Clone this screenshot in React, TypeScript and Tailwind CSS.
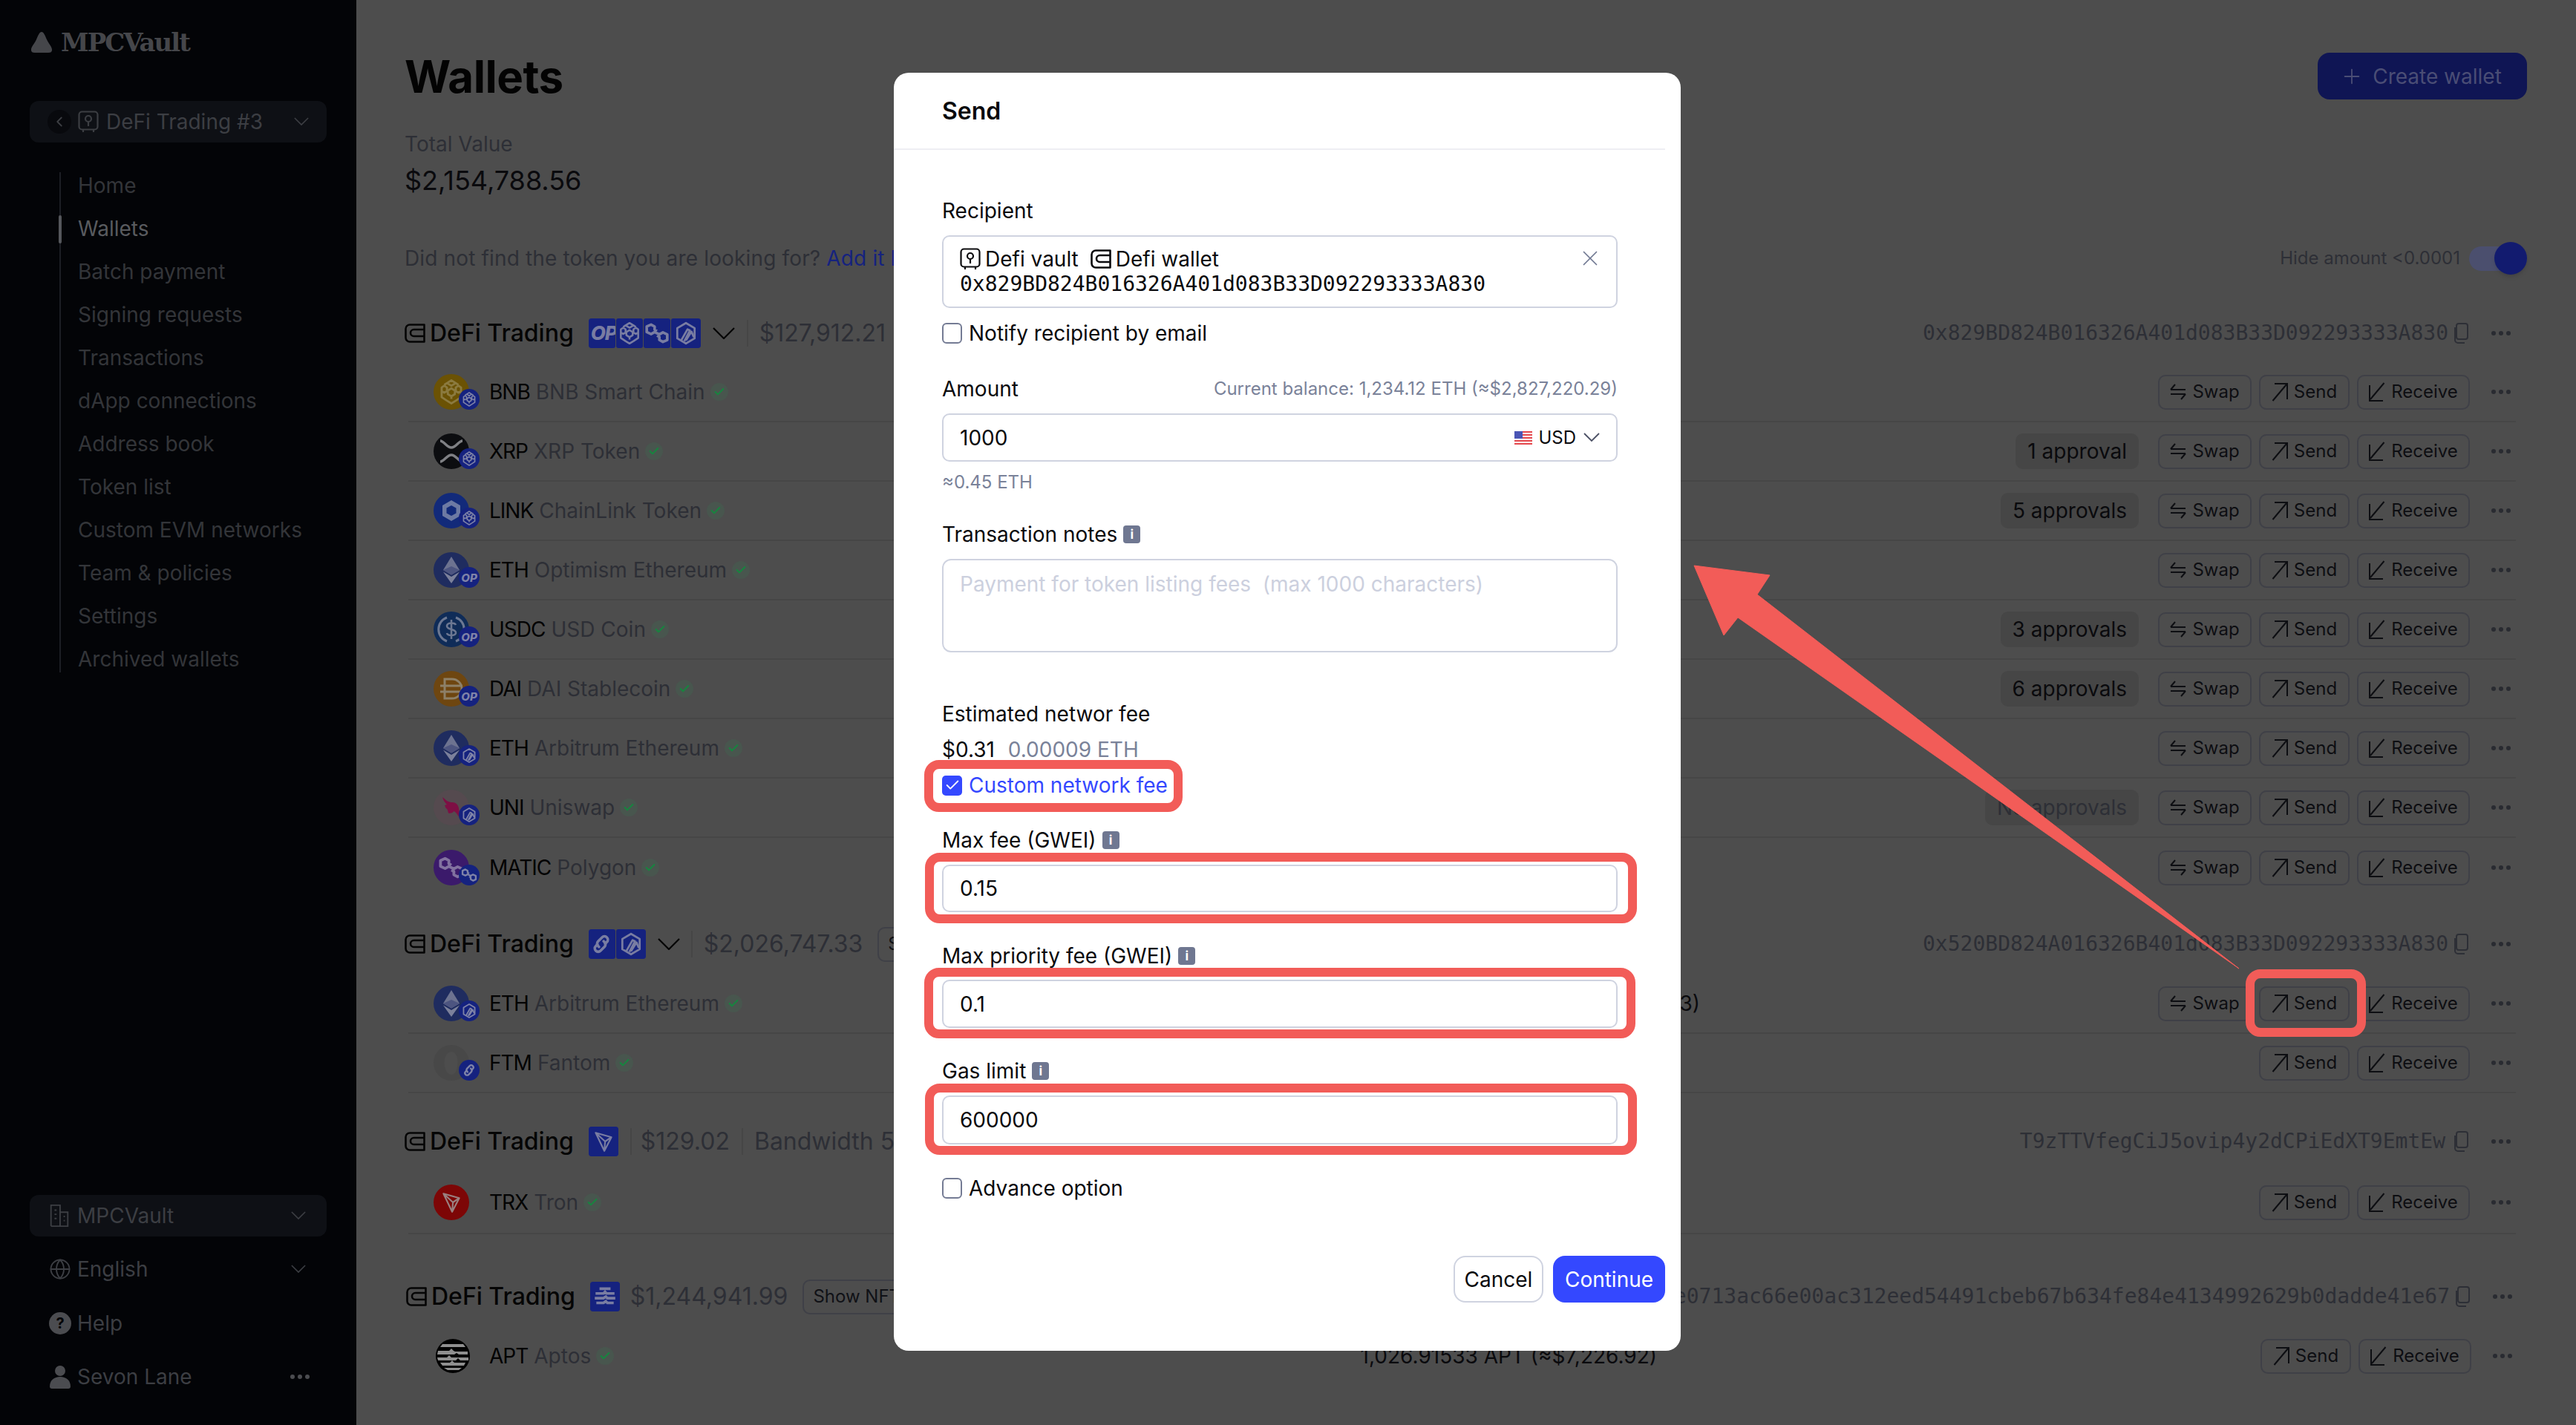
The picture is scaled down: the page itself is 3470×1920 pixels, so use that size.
import { ReactNode } from 'react';
import { ChevronLeft, Plus, X, Globe, Check } from 'lucide-react';

type Chain = 'op' | 'bnb' | 'poly' | 'arb' | 'link' | 'tron' | 'apt';

function BnbGlyph({ className }: { className: string }) {
  return (
    <svg viewBox="0 0 32 32" className={className} fill="none" stroke="currentColor" strokeWidth="2.400" strokeLinejoin="round">
      <path d="M16 3l5 3-5 3-5-3zM8 8l3-2M24 8l-3-2M5 11l3-2 3 2v4l-3 2-3-2zM27 11l-3-2-3 2v4l3 2 3-2zM16 12l4 2.500v4L16 21l-4-2.500v-4zM5 15v7l6 4M27 15v7l-6 4M11 26l5 3 5-3M16 21v3" />
    </svg>
  );
}

function PolyGlyph({ className }: { className: string }) {
  return (
    <svg viewBox="0 0 32 32" className={className} fill="none" stroke="currentColor" strokeWidth="3.400" strokeLinejoin="round">
      <path d="M16 13l-3-1.700V7.500L8.500 5 3 7.500v7L8.500 17l4.500-2.500 6 3 4.500-2.500 5.500 2.500v7L23.500 27 19 24.500v-4L16 19" />
    </svg>
  );
}

function ArbGlyph({ className }: { className: string }) {
  return (
    <svg viewBox="0 0 32 32" className={className} fill="none" stroke="currentColor" strokeWidth="2.600" strokeLinejoin="round">
      <path d="M16 3l11 6.500v13L16 29 5 22.500v-13z" />
      <path d="M10 25l8-14 3 1.500-7 13.500M16 25l7-11 3 7" />
    </svg>
  );
}

function LinkGlyph({ className }: { className: string }) {
  return (
    <svg viewBox="0 0 32 32" className={className} fill="none" stroke="currentColor" strokeWidth="3.400" strokeLinecap="round">
      <path d="M13 19.500l-1-1a4.200 4.200 0 0 1 0-6l5-5a4.200 4.200 0 0 1 6 6l-2 2" />
      <path d="M19 12.500l1 1a4.200 4.200 0 0 1 0 6l-5 5a4.200 4.200 0 0 1-6-6l2-2" />
    </svg>
  );
}

function TronGlyph({ className }: { className: string }) {
  return (
    <svg viewBox="0 0 32 32" className={className} fill="none" stroke="currentColor" strokeWidth="2" strokeLinejoin="round">
      <path d="M6 5l20 5.500-9 17.500zM6 5l11 23M6 5l12 11 8-5.500M18 16l-1 12" />
    </svg>
  );
}

function AptGlyph({ className }: { className: string }) {
  return (
    <svg viewBox="0 0 48 48" className={className}>
      <circle cx="24" cy="24" r="23" fill="#000" />
      <g fill="#8f8f8f">
        <path d="M10 8h28l3 4H7zM4 17h15l3-3 3 3 2 1h17v4H32l-3-2-3 2H3zM3 26h13l3-3 3 3h23v4H34l-3-3-3 3H4zM7 33h13l3-3 3 3h15l-2 4H10zM12 40h24l-4 3H17z" />
      </g>
    </svg>
  );
}

function ChainGlyph({ chain, className }: { chain: Chain; className: string }) {
  if (chain === 'bnb') return <BnbGlyph className={className} />;
  if (chain === 'poly') return <PolyGlyph className={className} />;
  if (chain === 'arb') return <ArbGlyph className={className} />;
  if (chain === 'link') return <LinkGlyph className={className} />;
  if (chain === 'tron') return <TronGlyph className={className} />;
  if (chain === 'apt') {
    return (
      <svg viewBox="0 0 32 32" className={className} fill="none" stroke="currentColor" strokeWidth="3.400">
        <path d="M9 6h14M4 12h10l2-2 2 2h10M3 18h11l3-2 2 2h10M5 24h9l3-2 2 2h8" />
      </svg>
    );
  }
  return <span className="ml-[3px] shrink-0 text-[26px] leading-none font-extrabold italic tracking-[-1px]">OP</span>;
}

function ChainBadge({ chain }: { chain: Chain }) {
  return (
    <span className="absolute right-0 bottom-0 flex h-[28px] w-[28px] items-center justify-center rounded-full bg-[#15227f] text-[#7f83a8]">
      {chain === 'op' ? (
        <span className="text-[15px] leading-none font-extrabold italic">OP</span>
      ) : (
        <ChainGlyph chain={chain} className="h-[22px] w-[22px]" />
      )}
    </span>
  );
}

function ChainStrip({ chains }: { chains: Chain[] }) {
  return (
    <div className="flex gap-[1px] overflow-hidden rounded-[3px]">
      {chains.map((c, i) => (
        <span
          key={i}
          className="flex h-[40px] w-[36px] items-center justify-center overflow-hidden rounded-[3px] bg-[#15227f] text-[#797da2] first:justify-start last:w-[40px] last:justify-center"
        >
          <ChainGlyph chain={c} className="h-[34px] w-[34px] shrink-0" />
        </span>
      ))}
    </div>
  );
}

function WalletIcon({ className }: { className: string }) {
  return (
    <svg viewBox="0 0 28 26" className={className} fill="none" stroke="currentColor" strokeWidth="2.600">
      <path d="M7 1.500h19.500v23H7A5.500 5.500 0 0 1 1.500 19V7A5.500 5.500 0 0 1 7 1.500z" strokeLinejoin="round" />
      <path d="M26.500 8H12.500a4.500 4.500 0 0 0 0 9h14" />
    </svg>
  );
}

function VaultIcon({ className }: { className: string }) {
  return (
    <svg viewBox="0 0 28 30" className={className} fill="none" stroke="currentColor" strokeWidth="2.200" strokeLinejoin="round">
      <rect x="1.500" y="1.500" width="25" height="24" rx="4" />
      <circle cx="14" cy="11" r="4" />
      <path d="M14 15v6M7 26v3M21 26v3" />
    </svg>
  );
}

function CopyIcon() {
  return (
    <svg viewBox="0 0 22 30" className="h-[30px] w-[22px] text-[#2d2f36]" fill="none" stroke="currentColor" strokeWidth="2">
      <rect x="6" y="2" width="15" height="21" rx="3" />
      <path d="M4 7v17a4 4 0 0 0 4 4h9" />
    </svg>
  );
}

function Chevron({ className }: { className: string }) {
  return (
    <svg viewBox="0 0 22 13" className={className} fill="none" stroke="currentColor" strokeWidth="1.800">
      <path d="M1 1l10 10L21 1" />
    </svg>
  );
}

function Dots({ className = 'text-[#292b31]' }: { className?: string }) {
  return (
    <span className={`flex w-[40px] items-center justify-center gap-[4px] ${className}`}>
      <i className="h-[6px] w-[6px] rounded-full bg-current" />
      <i className="h-[6px] w-[6px] rounded-full bg-current" />
      <i className="h-[6px] w-[6px] rounded-full bg-current" />
    </span>
  );
}

function SwapIcon() {
  return (
    <svg viewBox="0 0 22 24" className="h-[24px] w-[22px]" fill="none" stroke="currentColor" strokeWidth="2">
      <path d="M1 9h20M7 2L1 9M21 15H1M15 22l6-7" />
    </svg>
  );
}

function SendIcon() {
  return (
    <svg viewBox="0 0 22 26" className="h-[26px] w-[22px]" fill="none" stroke="currentColor" strokeWidth="2">
      <path d="M1.500 25L20 3M4 2h17v21" />
    </svg>
  );
}

function ReceiveIcon() {
  return (
    <svg viewBox="0 0 22 26" className="h-[26px] w-[22px]" fill="none" stroke="currentColor" strokeWidth="2">
      <path d="M20.500 1L2 23M1 4v21h18" />
    </svg>
  );
}

function ActionButton({ w, icon, label }: { w: string; icon: ReactNode; label: string }) {
  return (
    <span className={`flex h-[47px] items-center justify-center gap-[8px] rounded-[10px] border-2 border-[#3f4047] text-[24px] text-[#0d0e12] ${w}`}>
      {icon}
      {label}
    </span>
  );
}

type Token = {
  symbol: string;
  name: string;
  logo: ReactNode;
  chain?: Chain;
  pill?: string;
  pillFaded?: boolean;
  swap?: boolean;
  line?: boolean;
  balance?: string;
  balanceClass?: string;
  rowClass?: string;
};

function Row({ t }: { t: Token }) {
  return (
    <div className={`flex items-center ${t.line === false ? '' : 'border-b-2 border-[#464646]'} ${t.rowClass ?? 'h-[80px]'}`}>
      <div className="flex w-[1750px] shrink-0 items-center pl-[34px]">
        <div className="relative h-[48px] w-[62px] shrink-0">
          {t.logo}
          {t.chain && <ChainBadge chain={t.chain} />}
        </div>
        <span className="ml-[13px] text-[28px] leading-[36px] tracking-[-1px] text-[#030303]">{t.symbol}</span>
        <span className="ml-[8px] text-[28px] leading-[36px] text-[#2d2f36]">{t.name}</span>
        <span className="ml-[7px] flex h-[24px] w-[24px] items-center justify-center rounded-full bg-[#48564e] text-[#16863f]">
          <Check className="h-[16px] w-[16px]" strokeWidth={3} />
        </span>
        {t.balance && (
          <span className={`ml-auto whitespace-nowrap text-[28px] text-[#0a0a0d] ${t.balanceClass}`}>
            {t.balance}
          </span>
        )}
      </div>
      <div className="ml-auto flex items-center">
        {t.pill && (
          <span
            className={`mr-[26px] flex h-[48px] items-center rounded-[10px] bg-[#464646] px-[16px] text-[28px] ${t.pillFaded ? 'text-[#2d2f36]' : 'text-[#0a0a0d]'}`}
          >
            {t.pill}
          </span>
        )}
        {t.swap !== false && <ActionButton w="mr-[10px] w-[126px]" icon={<SwapIcon />} label="Swap" />}
        <ActionButton w="w-[122px]" icon={<SendIcon />} label="Send" />
        <ActionButton w="ml-[10px] w-[152px]" icon={<ReceiveIcon />} label="Receive" />
        <span className="ml-[22px]"><Dots /></span>
      </div>
    </div>
  );
}

function GroupHeader({ chains, rest, address, copyGap = 'ml-[5px]' }: { chains: Chain[]; rest: ReactNode; address: string; copyGap?: string }) {
  return (
    <div className="flex h-[60px] items-center pr-[15px]">
      <WalletIcon className="h-[26px] w-[28px] text-[#050505]" />
      <span className="ml-[6px] text-[32px] font-medium text-[#050505]">DeFi Trading</span>
      <span className="ml-[20px]"><ChainStrip chains={chains} /></span>
      {rest}
      <span className="ml-auto font-['DejaVu_Sans_Mono',monospace] text-[28px] whitespace-nowrap text-[#2d2f36]">{address}</span>
      <span className={copyGap}><CopyIcon /></span>
      <span className="ml-[24px]"><Dots /></span>
    </div>
  );
}

function HeaderChevron() {
  return (
    <svg viewBox="0 0 30 16" className="ml-[16px] h-[16px] w-[30px] text-[#050505]" fill="none" stroke="currentColor" strokeWidth="2.200">
      <path d="M1 1l14 14L29 1" />
    </svg>
  );
}

function Amount({ children, className }: { children: ReactNode; className: string }) {
  return <span className={`whitespace-nowrap text-[32px] text-[#2d2f36] ${className}`}>{children}</span>;
}

function ShowNft() {
  return (
    <span className="ml-[20px] flex h-[47px] items-center rounded-[10px] border-2 border-[#3f4047] px-[12px] text-[24px] text-[#101116]">
      Show NFTs
    </span>
  );
}

const Circle = ({ bg, children }: { bg: string; children?: ReactNode }) => (
  <span className={`absolute top-0 left-0 flex h-[48px] w-[48px] items-center justify-center overflow-hidden rounded-full ${bg}`}>
    {children}
  </span>
);

const logos = {
  bnb: (
    <Circle bg="bg-[#6b5204]">
      <BnbGlyph className="h-[38px] w-[38px] text-[#8b7a3f]" />
    </Circle>
  ),
  xrp: (
    <Circle bg="bg-[#0c0d10]">
      <svg viewBox="0 0 48 48" className="h-[48px] w-[48px]" fill="none" stroke="#7f8084" strokeWidth="3.500">
        <path d="M9 10c5 0 9 9 15 9s10-9 15-9M9 38c5 0 9-9 15-9s10 9 15 9" />
      </svg>
    </Circle>
  ),
  link: (
    <Circle bg="bg-[#122a7a]">
      <svg viewBox="0 0 48 48" className="h-[48px] w-[48px]">
        <path d="M24 10l12 7v14l-12 7-12-7V17z" fill="#6d7aa3" />
        <path d="M24 17l6.500 3.500v7L24 31l-6.500-3.500v-7z" fill="#122a7a" />
      </svg>
    </Circle>
  ),
  eth: (
    <Circle bg="bg-[#1f2c5f]">
      <svg viewBox="0 0 48 48" className="h-[48px] w-[48px]">
        <path d="M24 6l-11 18 11 6.500L35 24z" fill="#6d7390" />
        <path d="M24 19l-11 5 11 6.500L35 24z" fill="#4d5580" />
        <path d="M13 26.500L24 42l11-15.500L24 33z" fill="#7c819b" />
      </svg>
    </Circle>
  ),
  usdc: (
    <Circle bg="bg-[#0f2c58]">
      <svg viewBox="0 0 48 48" className="h-[48px] w-[48px]" fill="none" stroke="#6c7892" strokeWidth="3">
        <path d="M18 8a17 17 0 0 0 0 32M30 8a17 17 0 0 1 0 32" />
        <path d="M30 18c-1-3-11-4-12 1-1 6 13 4 12 10-1 4-11 4-12 0M24 11v26" strokeWidth="2.600" />
      </svg>
    </Circle>
  ),
  dai: (
    <Circle bg="bg-[#6e4610]">
      <svg viewBox="0 0 48 48" className="h-[48px] w-[48px]" fill="none" stroke="#8d8068" strokeWidth="3">
        <path d="M15 11h10a13 13 0 0 1 0 26H15zM9 20h30M9 28h30" />
      </svg>
    </Circle>
  ),
  uni: (
    <Circle bg="bg-[#554a4f]">
      <svg viewBox="0 0 48 48" className="h-[48px] w-[48px]" fill="#7d0f44">
        <path d="M12 10c6 5 8 7 13 7 5 0 8 3 9 8 1 5 1 9 2 13-4-3-5-8-9-9-1 3-4 2-6 3-2-1-1-4-3-6-2-1-2-3-3-5l3-1c-3-3-5-6-6-10z" />
      </svg>
    </Circle>
  ),
  matic: (
    <Circle bg="bg-[#3b1a6b]">
      <PolyGlyph className="h-[36px] w-[36px] text-[#8272a0]" />
    </Circle>
  ),
  ftm: (
    <Circle bg="bg-[#484848]">
      <svg viewBox="0 0 48 48" className="h-[48px] w-[48px]" fill="#4d4d4d">
        <path d="M24 9c7 0 10 10 8 20-1 6-2 10-8 11-6-1-8-6-9-11-2-10 2-20 9-20z" />
      </svg>
    </Circle>
  ),
  trx: (
    <Circle bg="bg-[#7d0606]">
      <TronGlyph className="h-[34px] w-[34px] text-[#9a8080]" />
    </Circle>
  ),
  apt: (
    <span className="absolute top-0 left-[2px] h-[48px] w-[48px]">
      <AptGlyph className="h-[48px] w-[48px]" />
    </span>
  ),
};

const group1: Token[] = [
  { symbol: 'BNB', name: 'BNB Smart Chain', logo: logos.bnb, chain: 'bnb' },
  { symbol: 'XRP', name: 'XRP Token', logo: logos.xrp, chain: 'bnb', pill: '1 approval' },
  { symbol: 'LINK', name: 'ChainLink Token', logo: logos.link, chain: 'bnb', pill: '5 approvals' },
  { symbol: 'ETH', name: 'Optimism Ethereum', logo: logos.eth, chain: 'op' },
  { symbol: 'USDC', name: 'USD Coin', logo: logos.usdc, chain: 'op', pill: '3 approvals' },
  { symbol: 'DAI', name: 'DAI Stablecoin', logo: logos.dai, chain: 'op', pill: '6 approvals' },
  { symbol: 'ETH', name: 'Arbitrum Ethereum', logo: logos.eth, chain: 'arb' },
  { symbol: 'UNI', name: 'Uniswap', logo: logos.uni, chain: 'arb', pill: 'No approvals', pillFaded: true },
  { symbol: 'MATIC', name: 'Polygon', logo: logos.matic, chain: 'poly', line: false },
];

const nav = [
  'Home',
  'Wallets',
  'Batch payment',
  'Signing requests',
  'Transactions',
  'dApp connections',
  'Address book',
  'Token list',
  'Custom EVM networks',
  'Team & policies',
  'Settings',
  'Archived wallets',
];

function Sidebar() {
  return (
    <aside className="flex h-full w-[480px] shrink-0 flex-col bg-[#030407] px-[40px] text-[28px] text-[#3c3e43]">
      <div className="mt-[42px] flex h-[30px] items-center">
        <svg viewBox="0 0 32 32" className="h-[30px] w-[32px] text-[#45464a]" fill="currentColor">
          <path d="M16 1c3 0 5 5 8 12 3 6 7 9 7 14 0 3-2 4-5 4H6c-3 0-5-1-5-4 0-5 4-8 7-14 3-7 5-12 8-12z" />
        </svg>
        <span className="ml-[10px] font-['DejaVu_Serif',serif] text-[34px] font-bold tracking-[-2px] text-[#45464a]">MPCVault</span>
      </div>
      <div className="mt-[64px] flex h-[56px] items-center rounded-[12px] bg-[#0e1015] pr-[24px] pl-[24px]">
        <span className="flex h-[32px] w-[32px] items-center justify-center rounded-full bg-[#08090d]">
          <ChevronLeft className="h-[22px] w-[22px]" />
        </span>
        <VaultIcon className="ml-[9px] h-[30px] w-[28px]" />
        <span className="ml-[10px]">DeFi Trading #3</span>
        <Chevron className="ml-auto h-[12px] w-[20px]" />
      </div>
      <ul className="mt-[40px] ml-[40px] flex w-[320px] flex-col gap-[22px] border-l-2 border-[#1c1e24] pl-[23px]">
        {nav.map(n => (
          <li key={n} className={`relative h-[36px] leading-[36px] whitespace-nowrap ${n === 'Wallets' ? 'text-[#595b5f]' : 'text-[#333539]'}`}>
            {n === 'Wallets' && <span className="absolute top-0 -left-[26px] h-[38px] w-[4px] rounded-full bg-[#55575c]" />}
            {n}
          </li>
        ))}
      </ul>
      <div className="mt-auto mb-[47px] flex flex-col">
        <div className="flex h-[56px] items-center rounded-[12px] bg-[#0e1015] pr-[28px] pl-[26px]">
          <svg viewBox="0 0 28 34" className="h-[32px] w-[28px]" fill="none" stroke="currentColor" strokeWidth="2">
            <path d="M2 32V2h13v30M15 12h11v20H2M7 9h3M7 15h3M7 21h3M20 18h2M20 24h2" />
          </svg>
          <span className="ml-[10px]">MPCVault</span>
          <Chevron className="ml-auto h-[12px] w-[20px]" />
        </div>
        <div className="mt-[26px] flex h-[36px] items-center pr-[28px] pl-[26px]">
          <Globe className="h-[30px] w-[30px]" strokeWidth={1.5} />
          <span className="ml-[8px]">English</span>
          <Chevron className="ml-auto h-[12px] w-[20px]" />
        </div>
        <div className="mt-[37px] flex h-[36px] items-center pl-[26px]">
          <span className="flex h-[30px] w-[30px] items-center justify-center rounded-full bg-[#4b4c50] text-[20px] leading-none font-bold text-[#030407]">?</span>
          <span className="ml-[8px]">Help</span>
        </div>
        <div className="mt-[36px] flex h-[36px] items-center pr-[16px] pl-[26px]">
          <svg viewBox="0 0 30 32" className="h-[32px] w-[30px] text-[#4b4c50]" fill="currentColor">
            <circle cx="15" cy="8" r="7" />
            <path d="M1 29c0-8 6-13 14-13s14 5 14 13c0 2-1 3-3 3H4c-2 0-3-1-3-3z" />
          </svg>
          <span className="ml-[8px]">Sevon Lane</span>
          <span className="ml-auto"><Dots className="text-[#4b4c50]" /></span>
        </div>
      </div>
    </aside>
  );
}

function Main() {
  return (
    <main className="min-w-0 flex-1 pr-[66px] pl-[65px]">
      <div className="flex h-[63px] items-center justify-between mt-[71px]">
        <h1 className="text-[60px] leading-none font-bold tracking-[-0.5px] text-[#030303]">Wallets</h1>
        <span className="flex h-[63px] w-[282px] items-center justify-center gap-[12px] rounded-[16px] bg-[#0f1554] pr-[4px] text-[28px] text-[#4a4d75]">
          <Plus className="h-[32px] w-[32px]" strokeWidth={1.4} />
          Create wallet
        </span>
      </div>
      <p className="mt-[42px] text-[28px] leading-[36px] text-[#2d2f36]">Total Value</p>
      <p className="mt-[9px] text-[36px] leading-[44px] text-[#0a0a0d]">$2,154,788.56</p>
      <div className="mt-[61px] flex h-[44px] items-center">
        <p className="text-[28px] tracking-[0.15px] text-[#2d2f36]">
          Did not find the token you are looking for? <span className="text-[#15227f]">Add it here</span>
        </p>
        <span className="ml-auto text-[24px] text-[#2d2f36]">Hide amount &lt;0.0001</span>
        <span className="relative ml-[12px] h-[33px] w-[78px] rounded-full bg-[#4b4f6e]">
          <span className="absolute top-[-6px] right-0 h-[44px] w-[44px] rounded-full bg-[#121b6f] shadow-md" />
        </span>
      </div>

      <section className="mt-[49px]">
        <GroupHeader
          chains={['op', 'bnb', 'poly', 'arb']}
          address="0x829BD824B016326A401d083B33D092293333A830"
          rest={
            <>
              <HeaderChevron />
              <span className="ml-[16px] h-[36px] w-[2px] bg-[#464646]" />
              <Amount className="ml-[15px]">$127,912.21</Amount>
            </>
          }
        />
        <div className="mt-[10px] ml-[5px] mr-[15px]">
          {group1.map((t, i) => <Row key={i} t={t} />)}
        </div>
      </section>

      <section className="mt-[33px]">
        <GroupHeader
          chains={['link', 'arb']}
          address="0x520BD824A016326B401d083B33D092293333A830"
          rest={
            <>
              <HeaderChevron />
              <span className="ml-[15px] h-[36px] w-[2px] bg-[#464646]" />
              <Amount className="ml-[15px]">$2,026,747.33</Amount>
              <ShowNft />
            </>
          }
        />
        <div className="mt-[11px] ml-[5px] mr-[15px]">
          <Row t={{ symbol: 'ETH', name: 'Arbitrum Ethereum', logo: logos.eth, chain: 'arb', balance: '885.3452 ETH (≈$2,026,747.33)', balanceClass: 'pr-[10px]' }} />
          <Row t={{ symbol: 'FTM', name: 'Fantom', logo: logos.ftm, chain: 'link', swap: false }} />
        </div>
      </section>

      <section className="mt-[35px]">
        <GroupHeader
          chains={['tron']}
          copyGap="ml-[9px]"
          address="T9zTTVfegCiJ5ovip4y2dCPiEdXT9EmtEw"
          rest={
            <>
              <span className="ml-[16px] h-[36px] w-[2px] bg-[#464646]" />
              <Amount className="ml-[12px]">$129.02</Amount>
              <span className="ml-[16px] h-[36px] w-[2px] bg-[#464646]" />
              <Amount className="ml-[15px]">Bandwidth 500</Amount>
            </>
          }
        />
        <div className="mt-[11px] ml-[5px] mr-[15px]">
          <Row t={{ symbol: 'TRX', name: 'Tron', logo: logos.trx, swap: false, rowClass: 'h-[84px]' }} />
        </div>
      </section>

      <section className="mt-[54px] ml-[2px] -mr-[2px]">
        <GroupHeader
          chains={['apt']}
          address="0xe0713ac66e00ac312eed54491cbeb67b634fe84e4134992629b0dadde41e67"
          rest={
            <>
              <Amount className="ml-[14px]">$1,244,941.99</Amount>
              <ShowNft />
            </>
          }
        />
        <div className="mt-[10px] ml-[3px] mr-[15px]">
          <Row t={{ symbol: 'APT', name: 'Aptos', logo: logos.apt, swap: false, line: false, balance: '1,026.91533 APT (≈$7,226.92)', balanceClass: 'pr-[68px]' }} />
        </div>
      </section>
    </main>
  );
}

function Info() {
  return (
    <span className="ml-[8px] inline-flex h-[24px] w-[23px] items-center justify-center rounded-[4px] bg-[#6f7791] text-[17px] leading-none font-bold text-white">i</span>
  );
}

function Field({ value, className }: { value: string; className: string }) {
  return (
    <div className={`flex items-center rounded-[10px] border-2 border-[#cfd3e0] pl-[22px] text-[28px] text-[#0a0a0d] ${className}`}>
      {value}
    </div>
  );
}

function Box({ checked }: { checked?: boolean }) {
  return checked ? (
    <span className="flex h-[27px] w-[27px] items-center justify-center rounded-[5px] bg-[#3448ff] text-white">
      <Check className="h-[22px] w-[22px]" strokeWidth={2} />
    </span>
  ) : (
    <span className="h-[28px] w-[27px] rounded-[6px] border-2 border-[#747b94]" />
  );
}

function Modal() {
  return (
    <div className="absolute top-[98px] left-[1204px] h-[1722px] w-[1060px] rounded-[20px] bg-white text-[28px] text-[#0a0a0d]">
      <div className="mr-[21px] flex h-[104px] items-center border-b-2 border-[#eeeef3] pt-[2px] pl-[65px]">
        <h2 className="text-[32px] font-semibold">Send</h2>
      </div>
      <div className="pr-[85px] pl-[65px] leading-[36px]">
        <p className="mt-[64px]">Recipient</p>
        <div className="relative mt-[15px] h-[98px] rounded-[10px] border-2 border-[#cfd3e0] px-[22px] pt-[13px] leading-[34px]">
          <div className="flex items-center">
            <VaultIcon className="h-[30px] w-[28px]" />
            <span className="ml-[6px]">Defi vault</span>
            <WalletIcon className="ml-[16px] h-[26px] w-[28px]" />
            <span className="ml-[6px]">Defi wallet</span>
          </div>
          <div className="font-['DejaVu_Sans_Mono',monospace]">0x829BD824B016326A401d083B33D092293333A830</div>
          <X className="absolute top-[12px] right-[18px] h-[34px] w-[34px] text-[#6f7791]" strokeWidth={1.2} />
        </div>
        <label className="mt-[16px] flex items-center gap-[9px]"><Box />Notify recipient by email</label>
        <div className="mt-[39px] flex items-center justify-between">
          <span>Amount</span>
          <span className="text-[24px] text-[#7a8299]">Current balance: 1,234.12 ETH (≈$2,827,220.29)</span>
        </div>
        <div className="mt-[15px] flex h-[65px] items-center rounded-[10px] border-2 border-[#cfd3e0] pr-[22px] pl-[22px]">
          1000
          <svg viewBox="0 0 24 18" className="ml-auto h-[18px] w-[24px]">
            <rect width="24" height="18" fill="#fff" />
            <path d="M0 1h24M0 5h24M0 9h24M0 13h24M0 17h24" stroke="#e4484d" strokeWidth="2" />
            <rect width="11" height="10" fill="#4a55b5" />
          </svg>
          <span className="ml-[8px] text-[24px]">USD</span>
          <Chevron className="ml-[10px] h-[13px] w-[22px] text-[#4c5165]" />
        </div>
        <p className="mt-[12px] text-[24px] leading-[32px] text-[#7a8299]">≈0.45 ETH</p>
        <p className="mt-[36px] flex items-center">Transaction notes<Info /></p>
        <div className="mt-[15px] h-[126px] rounded-[12px] border-2 border-[#cfd3e0] px-[22px] pt-[14px] whitespace-pre text-[#ccd0de]">
          Payment for token listing fees  (max 1000 characters)
        </div>
        <p className="mt-[65px]">Estimated networ fee</p>
        <p className="mt-[12px]">$0.31 <span className="ml-[10px] text-[#7a8299]">0.00009 ETH</span></p>
        <label className="mt-[12px] flex items-center gap-[9px] text-[#3448ff]"><Box checked />Custom network fee</label>
        <p className="mt-[38px] flex items-center">Max fee (GWEI)<Info /></p>
        <Field value="0.15" className="mt-[15px] h-[64px]" />
        <p className="mt-[41px] flex items-center">Max priority fee (GWEI)<Info /></p>
        <Field value="0.1" className="mt-[14px] h-[65px]" />
        <p className="mt-[40px] flex items-center">Gas limit<Info /></p>
        <Field value="600000" className="mt-[15px] h-[66px]" />
        <label className="mt-[41px] flex items-center gap-[9px]"><Box />Advance option</label>
        <div className="-mr-[64px] mt-[73px] flex justify-end gap-[13px]">
          <span className="flex h-[63px] w-[121px] items-center justify-center rounded-[16px] border-2 border-[#cfd3e0]">Cancel</span>
          <span className="flex h-[63px] w-[151px] items-center justify-center rounded-[16px] bg-[#3448ff] text-white">Continue</span>
        </div>
      </div>
    </div>
  );
}

function Annotations() {
  return (
    <>
      <div className="absolute top-[1024px] left-[1245px] h-[70px] w-[348px] rounded-[20px] border-[12px] border-[#f25c58]" />
      <div className="absolute top-[1149px] left-[1246px] h-[95px] w-[959px] rounded-[20px] border-[12px] border-[#f25c58]" />
      <div className="absolute top-[1304px] left-[1245px] h-[95px] w-[958px] rounded-[20px] border-[12px] border-[#f25c58]" />
      <div className="absolute top-[1460px] left-[1246px] h-[96px] w-[959px] rounded-[20px] border-[12px] border-[#f25c58]" />
      <div className="absolute top-[1306px] left-[3025px] h-[91px] w-[162px] rounded-[20px] border-[12px] border-[#f25c58]" />
      <svg className="absolute top-[740px] left-[2260px] h-[580px] w-[780px]" viewBox="2260 740 780 580">
        <path
          d="M2282 762L2384 775L2367 801L3016 1305L2341 832L2322 856Z"
          fill="#f25c58"
          stroke="#f25c58"
          strokeWidth="1"
          strokeLinejoin="round"
        />
      </svg>
    </>
  );
}

export default function App() {
  return (
    <div className="relative flex h-[1920px] w-[3470px] overflow-hidden bg-[#4d4d4d] font-['Inter',sans-serif]">
      <Sidebar />
      <Main />
      <Modal />
      <Annotations />
    </div>
  );
}
